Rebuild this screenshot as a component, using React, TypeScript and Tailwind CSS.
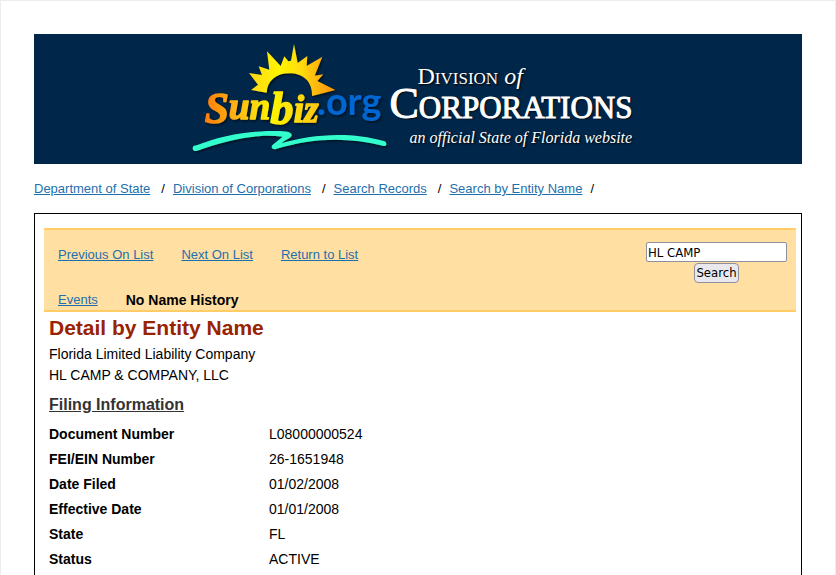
import React from 'react';

const breadcrumbs = ['Department of State', 'Division of Corporations', 'Search Records', 'Search by Entity Name'];

const filing = [
    { label: 'Document Number', value: 'L08000000524' },
    { label: 'FEI/EIN Number', value: '26-1651948' },
    { label: 'Date Filed', value: '01/02/2008' },
    { label: 'Effective Date', value: '01/01/2008' },
    { label: 'State', value: 'FL' },
    { label: 'Status', value: 'ACTIVE' },
];

function NavLink({ children }: { children: React.ReactNode }) {
    return (
        <a href="#" className="text-[13px] text-[#1e6fad] underline">
            {children}
        </a>
    );
}

function SunbizLogo() {
    return (
        <svg viewBox="0 0 630 390" className="w-[210px] h-[130px] shrink-0" role="img" aria-label="Sunbiz.org">
            <defs>
                <linearGradient id="sun" x1="200" y1="0" x2="470" y2="0" gradientUnits="userSpaceOnUse">
                    <stop offset="0" stopColor="#ffd21c" />
                    <stop offset="0.35" stopColor="#fff500" />
                    <stop offset="0.6" stopColor="#ffdc0a" />
                    <stop offset="1" stopColor="#ff8c10" />
                </linearGradient>
                <linearGradient id="word" x1="70" y1="0" x2="410" y2="0" gradientUnits="userSpaceOnUse">
                    <stop offset="0" stopColor="#ff7a10" />
                    <stop offset="0.3" stopColor="#ffb812" />
                    <stop offset="0.6" stopColor="#fff500" />
                    <stop offset="1" stopColor="#ffc814" />
                </linearGradient>
                <filter id="drop" x="-10%" y="-10%" width="120%" height="130%">
                    <feDropShadow dx="4" dy="4" stdDeviation="3" floodColor="#000" floodOpacity="0.6" />
                </filter>
            </defs>
            <g filter="url(#drop)">
                <path
                    fill="url(#sun)"
                    d="M260 176 L213 168 L234 152 L207 117 L246 123 L236 97 L268 107 L261 52 L302 96 L313 67 L325 82 L333 80 L342 30 L353 87 L382 66 L380 96 L427 68 L404 125 L430 121 L412 141 L466 168 L396 186 C398 142 368 118 328 118 C288 118 262 140 260 176 Z"
                />
                <text
                    x="74"
                    y="266"
                    fill="url(#word)"
                    stroke="url(#word)"
                    strokeWidth="4"
                    strokeLinejoin="round"
                    fontSize="112"
                    fontWeight="700"
                    fontStyle="italic"
                    fontFamily="'Liberation Serif', serif"
                >
                    <tspan fontSize="130">S</tspan>
                    <tspan y="254" fontSize="112">un</tspan>
                    <tspan y="270" fontSize="140">b</tspan>
                    <tspan y="264">iz</tspan>
                </text>
                <text x="411" y="242" fill="#0566d2" fontSize="113" fontWeight="700" fontFamily="Lato, sans-serif">
                    .org
                </text>
                <path
                    fill="#33ffcc"
                    d="M38 342 C38 336 44 334 50 334 C120 306 200 290 290 291 C318 291 333 294 335 302 C337 311 318 317 304 328 C390 304 500 290 614 322 C621 325 621 338 612 336 C500 308 400 312 288 345 C276 348 270 338 280 331 L308 308 C230 298 140 318 52 350 C44 353 37 349 38 342 Z"
                />
            </g>
        </svg>
    );
}

export default function App() {
    return (
        <div className="flex min-h-screen flex-col border border-b-0 border-[#ececec] bg-white px-[33px] pt-[33px] text-sm text-black [font-family:'Liberation_Sans',Arial,sans-serif]">
            {/* Banner */}
            <header className="flex h-[130px] justify-center bg-[#002649] pr-6 text-white">
                <SunbizLogo />
                <div className="flex flex-col pt-[30px] [font-family:'Liberation_Serif',serif] [text-shadow:1px_1px_2px_#000]">
                    <div className="pl-7 text-2xl leading-6 [font-variant-caps:small-caps]">
                        Division <i className="[font-variant-caps:normal]">of</i>
                    </div>
                    <h1 className="text-[44px] leading-8 [font-variant-caps:small-caps] [-webkit-text-stroke:1px_white]">Corporations</h1>
                    <p className="pt-1.5 pl-5 text-base leading-6 italic">an official State of Florida website</p>
                </div>
            </header>

            {/* Breadcrumbs */}
            <nav className="flex h-[49px] items-center gap-2 pt-0.5 text-[13px]">
                {breadcrumbs.map((item) => (
                    <React.Fragment key={item}>
                        <NavLink>{item}</NavLink>
                        <span className="pl-[3px] last:pl-0">/</span>
                    </React.Fragment>
                ))}
            </nav>

            <main className="grow border border-b-0 border-black pt-3.5 pr-[5px] pl-[9px]">
                {/* Record navigation */}
                <div className="flex h-[84px] justify-between border-y-2 border-[#ffcc66] bg-[#ffdfa2] pr-[9px] pl-3.5">
                    <div className="flex flex-col justify-between pt-[15px]">
                        <div className="flex gap-7 leading-5">
                            <NavLink>Previous On List</NavLink>
                            <NavLink>Next On List</NavLink>
                            <NavLink>Return to List</NavLink>
                        </div>
                        <div className="flex gap-7 leading-5">
                            <NavLink>Events</NavLink>
                            <b>No Name History</b>
                        </div>
                    </div>
                    <form className="flex flex-col items-center pt-3 text-[13px] [font-family:'DejaVu_Sans_Condensed','DejaVu_Sans',sans-serif]">
                        <input
                            aria-label="Entity name"
                            defaultValue="HL CAMP"
                            className="h-5 w-[141px] rounded-xs border border-[#8f8f9d] bg-white px-px"
                        />
                        <button
                            type="button"
                            className="mt-px h-5 rounded border border-[#8f8f9d] bg-[#e9e9ed] px-px leading-4"
                        >
                            Search
                        </button>
                    </form>
                </div>

                {/* Entity detail */}
                <div className="px-[5px]">
                    <h2 className="text-[21px] leading-8 font-bold text-[#992200]">Detail by Entity Name</h2>
                    <p className="leading-[21px]">Florida Limited Liability Company</p>
                    <p className="leading-[21px]">HL CAMP &amp; COMPANY, LLC</p>
                    <h3 className="pt-[3px] pb-px text-base leading-8 font-bold text-[#333] underline">Filing Information</h3>
                    <dl className="grid grid-cols-[220px_1fr] leading-[25px]">
                        {filing.map((row) => (
                            <React.Fragment key={row.label}>
                                <dt className="font-bold">{row.label}</dt>
                                <dd>{row.value}</dd>
                            </React.Fragment>
                        ))}
                    </dl>
                </div>
            </main>
        </div>
    );
}
